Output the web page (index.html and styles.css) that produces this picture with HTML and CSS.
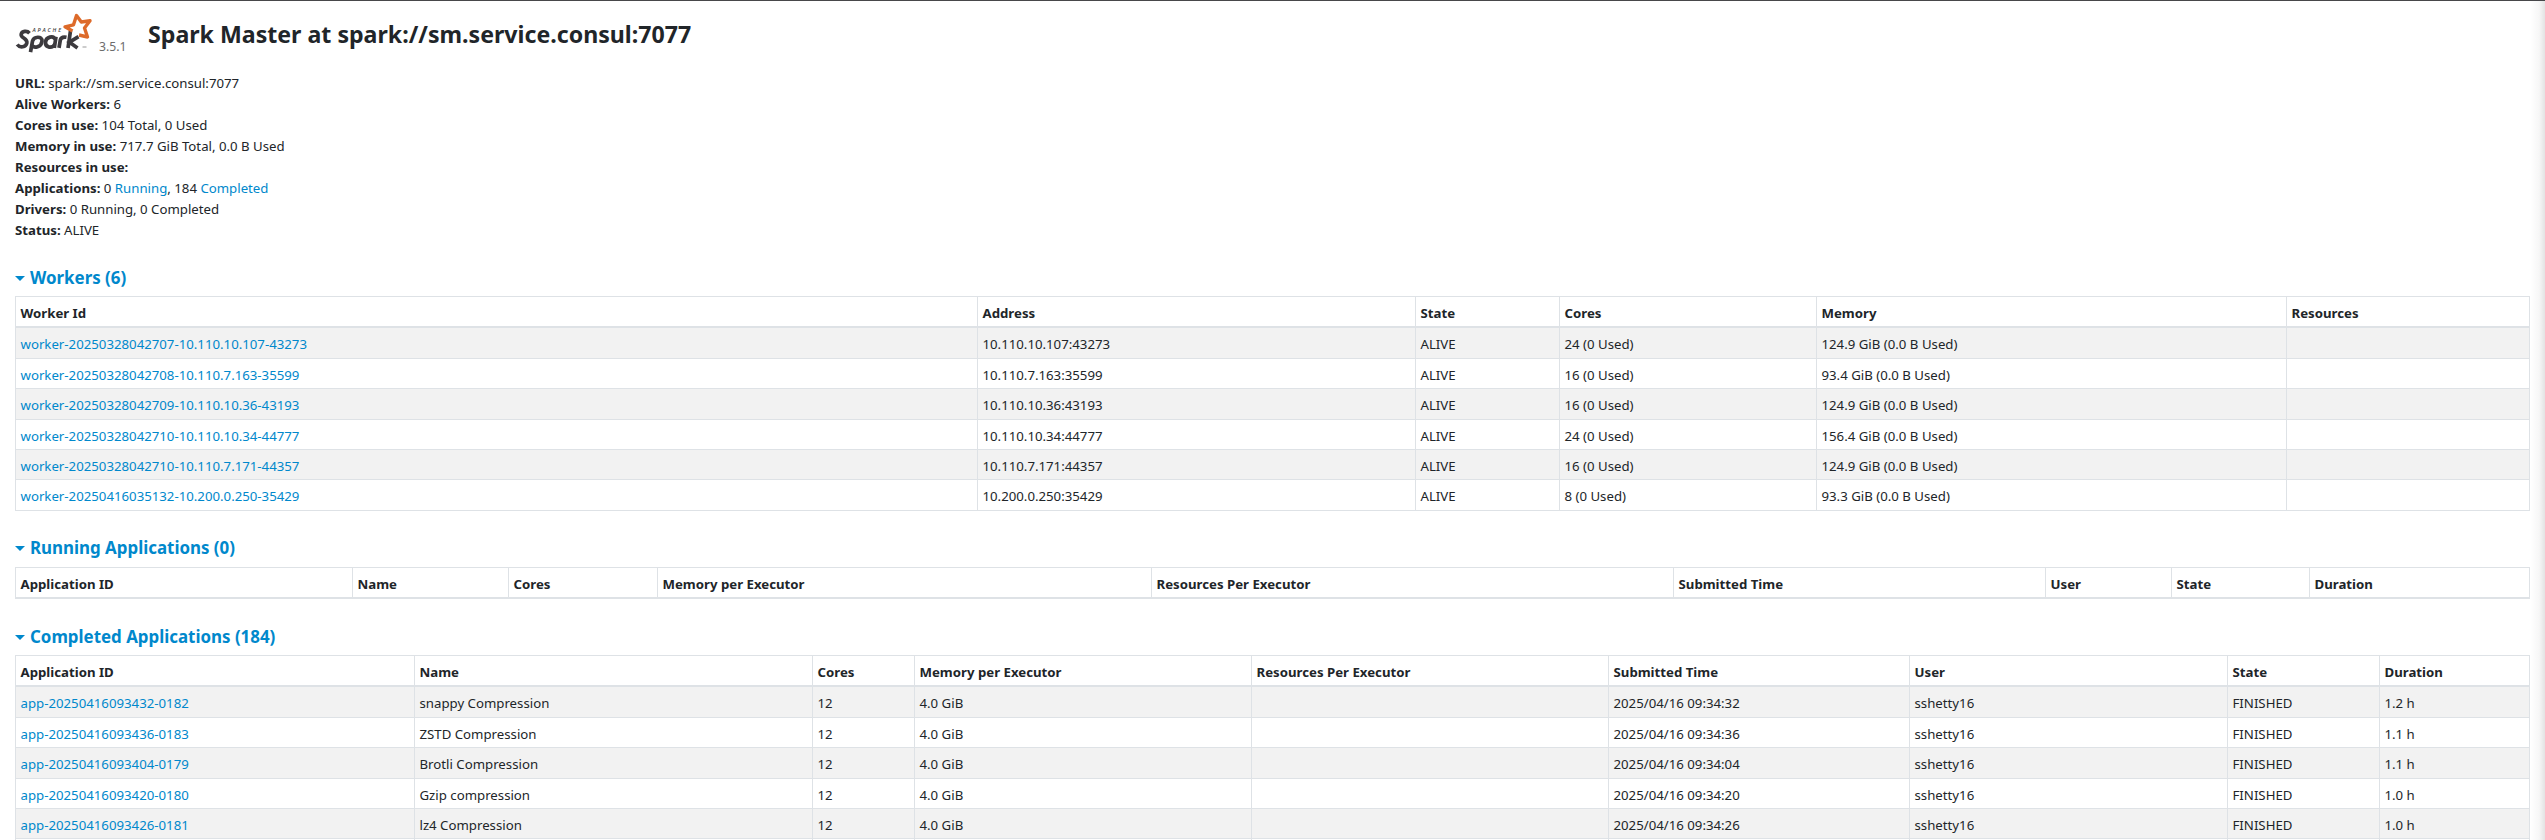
FILE: index.html
```html
<!DOCTYPE html>
<html lang="en">
<head>
<meta charset="utf-8">
<title>Spark Master at spark://sm.service.consul:7077</title>
<link rel="stylesheet" href="styles.css">
</head>
<body>
<div class="edge-shadow"></div>
<main class="page">
  <header class="header">
    <svg class="logo" viewBox="0 0 80 42" role="img" aria-label="Apache Spark">
      <text class="logo-apache" x="17.500" y="19.800" textLength="28.5">APACHE</text>
      <g class="logo-word" transform="translate(0 .7)">
        <path d="M14.5 20.5C12 17.6 7 18.4 6.2 21.5C5.2 25.5 13 25.200 11.800 30.500C10.800 34.300 5 35.600 2.200 31.800"/>
        <path d="M15.500 39.500L17.500 28.500C18.500 23.500 27.500 23 27 28.500C26.500 34.500 19 36.200 17 32.500"/>
        <path d="M41 24L39.300 35.200M40.500 27C38.500 22.300 31 24 30.500 29.500C30.200 35.500 37.500 36 39.700 31.500"/>
        <path d="M44 35.200L45.300 27.500C45.800 25 48 24 51.500 24.600"/>
        <path d="M55.500 18L53 35.200M63.500 24L54.500 29.500L62.500 35.200"/>
      </g>
      <path class="logo-star" d="M57.500 19L50 14.800L58.500 12.800L61.500 3.500L66.300 10L75 8.800L69.500 16L72.500 25L64 23"/>
      <path class="logo-tm" d="M67.500 35h4"/>
    </svg>
    <span class="version">3.5.1</span>
    <h1 class="title">Spark Master at spark://sm.service.consul:7077</h1>
  </header>
  <ul class="summary">
    <li><strong>URL:</strong> spark://sm.service.consul:7077</li>
    <li><strong>Alive Workers:</strong> 6</li>
    <li><strong>Cores in use:</strong> 104 Total, 0 Used</li>
    <li><strong>Memory in use:</strong> 717.7 GiB Total, 0.0 B Used</li>
    <li><strong>Resources in use:</strong></li>
    <li><strong>Applications:</strong> 0 <a>Running</a>, 184 <a>Completed</a></li>
    <li><strong>Drivers:</strong> 0 Running, 0 Completed</li>
    <li><strong>Status:</strong> ALIVE</li>
  </ul>

  <section class="workers">
    <h2 class="heading"><span class="caret"></span>Workers (6)</h2>
    <table class="table">
      <colgroup><col class="w-id"><col class="w-address"><col class="w-state"><col class="w-cores"><col class="w-memory"><col></colgroup>
      <thead><tr><th>Worker Id</th><th>Address</th><th>State</th><th>Cores</th><th>Memory</th><th>Resources</th></tr></thead>
      <tbody>
        <tr><td><a>worker-20250328042707-10.110.10.107-43273</a></td><td>10.110.10.107:43273</td><td>ALIVE</td><td>24 (0 Used)</td><td>124.9 GiB (0.0 B Used)</td><td></td></tr>
        <tr><td><a>worker-20250328042708-10.110.7.163-35599</a></td><td>10.110.7.163:35599</td><td>ALIVE</td><td>16 (0 Used)</td><td>93.4 GiB (0.0 B Used)</td><td></td></tr>
        <tr><td><a>worker-20250328042709-10.110.10.36-43193</a></td><td>10.110.10.36:43193</td><td>ALIVE</td><td>16 (0 Used)</td><td>124.9 GiB (0.0 B Used)</td><td></td></tr>
        <tr><td><a>worker-20250328042710-10.110.10.34-44777</a></td><td>10.110.10.34:44777</td><td>ALIVE</td><td>24 (0 Used)</td><td>156.4 GiB (0.0 B Used)</td><td></td></tr>
        <tr><td><a>worker-20250328042710-10.110.7.171-44357</a></td><td>10.110.7.171:44357</td><td>ALIVE</td><td>16 (0 Used)</td><td>124.9 GiB (0.0 B Used)</td><td></td></tr>
        <tr><td><a>worker-20250416035132-10.200.0.250-35429</a></td><td>10.200.0.250:35429</td><td>ALIVE</td><td>8 (0 Used)</td><td>93.3 GiB (0.0 B Used)</td><td></td></tr>
      </tbody>
    </table>
  </section>

  <section class="running">
    <h2 class="heading"><span class="caret"></span>Running Applications (0)</h2>
    <table class="table">
      <colgroup><col class="r-id"><col class="r-name"><col class="r-cores"><col class="r-memory"><col class="r-resources"><col class="r-time"><col class="r-user"><col class="r-state"><col></colgroup>
      <thead><tr><th>Application ID</th><th>Name</th><th>Cores</th><th>Memory per Executor</th><th>Resources Per Executor</th><th>Submitted Time</th><th>User</th><th>State</th><th>Duration</th></tr></thead>
    </table>
  </section>

  <section class="completed">
    <h2 class="heading"><span class="caret"></span>Completed Applications (184)</h2>
    <table class="table">
      <colgroup><col class="c-id"><col class="c-name"><col class="c-cores"><col class="c-memory"><col class="c-resources"><col class="c-time"><col class="c-user"><col class="c-state"><col></colgroup>
      <thead><tr><th>Application ID</th><th>Name</th><th>Cores</th><th>Memory per Executor</th><th>Resources Per Executor</th><th>Submitted Time</th><th>User</th><th>State</th><th>Duration</th></tr></thead>
      <tbody>
        <tr><td><a>app-20250416093432-0182</a></td><td>snappy Compression</td><td>12</td><td>4.0 GiB</td><td></td><td>2025/04/16 09:34:32</td><td>sshetty16</td><td>FINISHED</td><td>1.2 h</td></tr>
        <tr><td><a>app-20250416093436-0183</a></td><td>ZSTD Compression</td><td>12</td><td>4.0 GiB</td><td></td><td>2025/04/16 09:34:36</td><td>sshetty16</td><td>FINISHED</td><td>1.1 h</td></tr>
        <tr><td><a>app-20250416093404-0179</a></td><td>Brotli Compression</td><td>12</td><td>4.0 GiB</td><td></td><td>2025/04/16 09:34:04</td><td>sshetty16</td><td>FINISHED</td><td>1.1 h</td></tr>
        <tr><td><a>app-20250416093420-0180</a></td><td>Gzip compression</td><td>12</td><td>4.0 GiB</td><td></td><td>2025/04/16 09:34:20</td><td>sshetty16</td><td>FINISHED</td><td>1.0 h</td></tr>
        <tr><td><a>app-20250416093426-0181</a></td><td>lz4 Compression</td><td>12</td><td>4.0 GiB</td><td></td><td>2025/04/16 09:34:26</td><td>sshetty16</td><td>FINISHED</td><td>1.0 h</td></tr>
        <tr><td></td><td></td><td></td><td></td><td></td><td></td><td></td><td></td><td></td></tr>
      </tbody>
    </table>
  </section>
</main>
</body>
</html>
```
FILE: styles.css
```css
* { box-sizing: border-box; }
html, body { height: 840px; overflow: hidden; }
body {
  margin: 0;
  background: #fff;
  color: #212529;
  font: 13.22px/21px "Segoe UI", "Noto Sans", "Open Sans", sans-serif;
  border-top: 1px solid #47474a;
}
a { color: #0088cc; text-decoration: none; }
.edge-shadow {
  position: absolute; top: 1px; right: 0; width: 15px; height: 839px;
  background: linear-gradient(to right, rgba(0,0,0,0), rgba(0,0,0,.03) 60%, rgba(0,0,0,.11));
}
.page { padding: 0 15px; }
.header { display: flex; height: 72px; padding-top: 11px; }
.logo { width: 80px; height: 42px; flex: none; }
.logo-apache { font: italic 600 5.4px "Open Sans", sans-serif; fill: #3c3a3e; }
.logo-word { fill: none; stroke: #3c3a3e; stroke-width: 3.7; }
.logo-star { fill: none; stroke: #dd6a2a; stroke-width: 3.4; stroke-linejoin: round; }
.logo-tm { stroke: #999; stroke-width: 1; }
.version { width: 53px; padding: 24px 0 0 4px; color: #6c6c6c; font-size: 12.2px; }
.title { margin: 5px 0 0; font-size: 23.15px; line-height: 34px; font-weight: 700; }
.summary { margin: 0; padding: 0; list-style: none; height: 168px; }
.heading { display: flex; align-items: center; margin: 0 0 5px; height: 28px; color: #0088cc; font-size: 16.9px; font-weight: 700; }
.caret { width: 10px; margin: 3px 5px 0 0; border: 5px solid transparent; border-top-color: #0088cc; border-bottom: 0; }
.workers, .running, .completed { display: flow-root; }
.workers { padding-top: 22px; height: 277px; }
.running { padding-top: 15px; height: 89px; }
.running .heading { margin-bottom: 6px; }
.completed { padding-top: 15px; }
.table { width: 2515px; table-layout: fixed; border-collapse: separate; border-spacing: 0; border-top: 1px solid #dee2e6; border-left: 1px solid #dee2e6; }
th, td { height: 30px; padding: 2px 4px 0 4.5px; border: solid #dee2e6; border-width: 0 1px 1px 0; text-align: left; line-height: 20px; white-space: nowrap; }
th { height: 31px; border-bottom-width: 2px; }
tbody tr:nth-child(1) td, tbody tr:nth-child(3) td, tbody tr:nth-child(6) td { height: 31px; }
tbody tr:nth-child(odd) { background: #f2f2f2; }
.w-id { width: 962px; } .w-address { width: 438px; } .w-state { width: 144px; } .w-cores { width: 257px; } .w-memory { width: 470px; }
.r-id { width: 337px; } .r-name { width: 156px; } .r-cores { width: 149px; } .r-memory { width: 494px; } .r-resources { width: 522px; } .r-time { width: 372px; } .r-user { width: 126px; } .r-state { width: 138px; }
.c-id { width: 399px; } .c-name { width: 398px; } .c-cores { width: 102px; } .c-memory { width: 337px; } .c-resources { width: 357px; } .c-time { width: 301px; } .c-user { width: 318px; } .c-state { width: 152px; }
```
